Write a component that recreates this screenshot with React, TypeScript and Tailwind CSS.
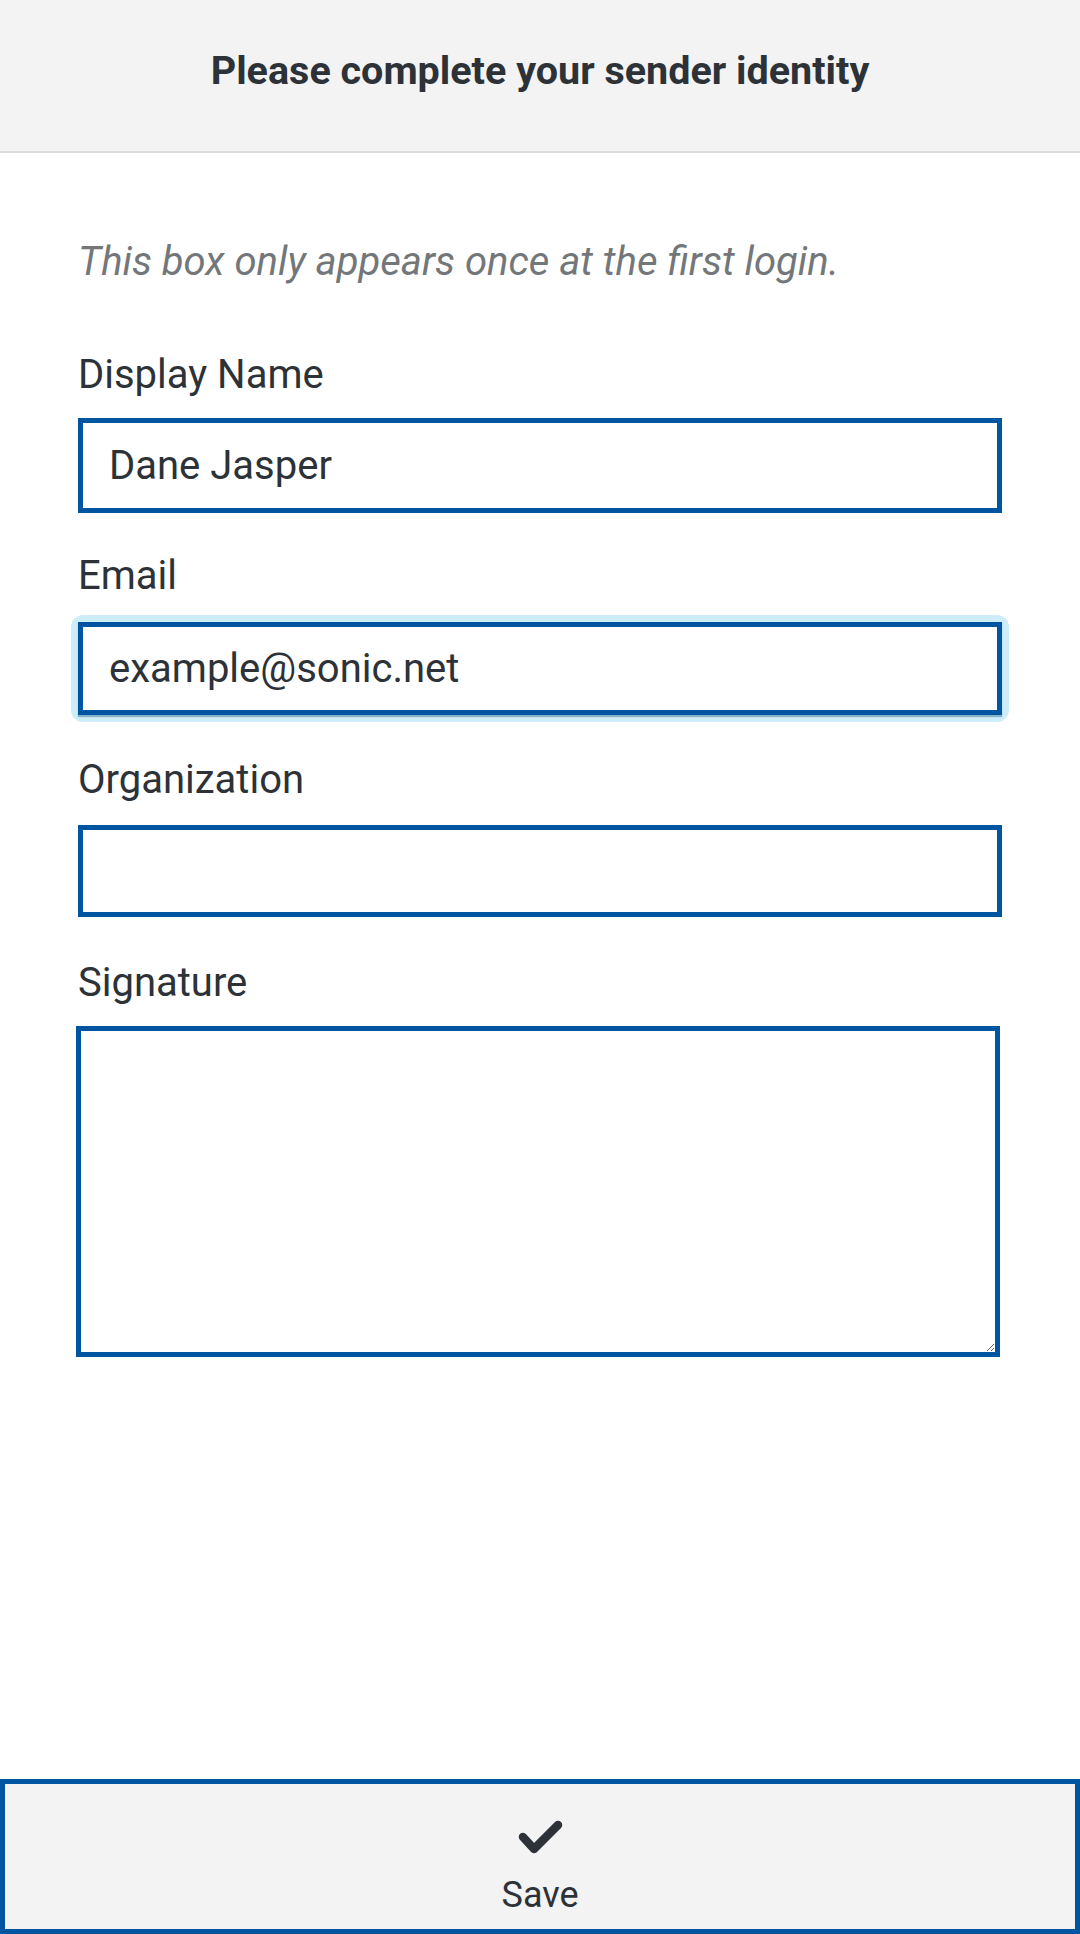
import { useState } from "react"

// first-login identity prompt: name, email, org and signature
export default function App() {
  const [name, setName] = useState("Dane Jasper")
  const [email, setEmail] = useState("example@sonic.net")
  const [org, setOrg] = useState("")
  const [signature, setSignature] = useState("")

  return (
    <div className="min-h-[1934px] flex flex-col bg-white text-[#2c3237] font-[family-name:Roboto,sans-serif]">
      {/* Header */}
      <div className="h-[153px] flex items-center justify-center pb-[10px] bg-[#f3f3f3] border-b-2 border-[#dcdcdc]">
        <h1 className="text-[39.5px] leading-[44px] font-bold">Please complete your sender identity</h1>
      </div>

      {/* Form */}
      <div className="flex-1 flex flex-col px-[78px]">
        <p className="mt-[87px] text-[40px] leading-[44px] italic text-[#74777a]">
          This box only appears once at the first login.
        </p>

        <label className="mt-[69px] text-[40px] leading-[44px]">Display Name</label>
        <input
          value={name}
          onChange={(e) => setName(e.target.value)}
          className="mt-[21px] h-[95px] w-full border-[5px] border-[#0055a0] pl-[26px] text-[40px] outline-none"
        />

        <label className="mt-[41px] text-[40px] leading-[44px]">Email</label>
        <div className="mt-[17px] -mx-[7px] p-[7px] rounded-[12px] bg-[#cdedfa]">
          <input
            value={email}
            onChange={(e) => setEmail(e.target.value)}
            className="h-[93px] w-full border-[5px] border-[#0055a0] bg-white pl-[26px] text-[40px] outline-none shadow-[0_2px_1px_rgba(0,70,110,0.35)]"
          />
        </div>

        <label className="mt-[36px] text-[40px] leading-[44px]">Organization</label>
        <input
          value={org}
          onChange={(e) => setOrg(e.target.value)}
          className="mt-[23px] h-[92px] w-full border-[5px] border-[#0055a0] pl-[26px] text-[40px] outline-none"
        />

        <label className="mt-[44px] text-[40px] leading-[44px]">Signature</label>
        <textarea
          value={signature}
          onChange={(e) => setSignature(e.target.value)}
          className="mt-[21px] h-[331px] w-[924px] -ml-[2px] border-[5px] border-[#0055a0] p-[20px] text-[40px] outline-none"
        />
      </div>

      {/* Save */}
      <button className="h-[155px] w-full flex flex-col items-center border-[5px] border-[#0055a0] bg-[#f3f3f3] pt-[34px]">
        <svg width="48" height="40" viewBox="0 0 48 40" fill="none">
          <polyline
            points="7,19 18,31 42,7"
            stroke="#2c3237"
            strokeWidth="8.5"
            strokeLinecap="round"
            strokeLinejoin="round"
          />
        </svg>
        <span className="mt-[17px] text-[36px] leading-[40px]">Save</span>
      </button>
    </div>
  )
}
